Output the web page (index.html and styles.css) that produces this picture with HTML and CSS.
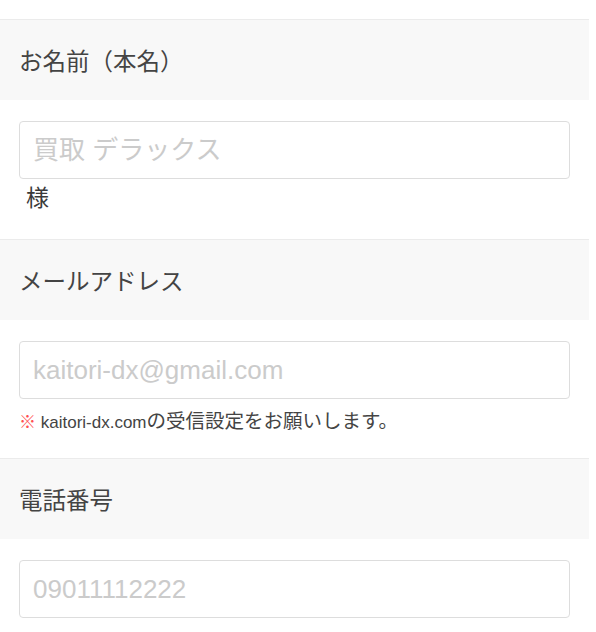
FILE: index.html
```html
<!DOCTYPE html>
<html lang="ja">
<head>
<meta charset="utf-8">
<title>お客様情報</title>
<link rel="stylesheet" href="styles.css">
</head>
<body>
<form class="form">
  <section class="section">
    <div class="section-head">お名前（本名）</div>
    <div class="section-body">
      <input class="field" type="text" placeholder="買取 デラックス">
      <div class="suffix">様</div>
    </div>
  </section>
  <section class="section">
    <div class="section-head">メールアドレス</div>
    <div class="section-body">
      <input class="field" type="email" placeholder="kaitori-dx@gmail.com">
      <p class="note"><span class="note-mark">※</span> kaitori-dx.com<span class="note-ja">の受信設定をお願いします。</span></p>
    </div>
  </section>
  <section class="section">
    <div class="section-head">電話番号</div>
    <div class="section-body">
      <input class="field" type="tel" placeholder="09011112222">
    </div>
  </section>
</form>
</body>
</html>
```

FILE: styles.css
```css
html {
  overflow: hidden;
}

body {
  margin: 0;
  padding-top: 19px;
  background: #ffffff;
  font-family: "Liberation Sans", "Noto Sans CJK JP", sans-serif;
  color: #3a3a3a;
}

.form {
  width: 589px;
  margin: 0;
}

.section {
  border-top: 1px solid #ebebeb;
}

.section-head {
  height: 80px;
  background: #f8f8f8;
  padding-left: 19px;
  display: flex;
  align-items: center;
  font-size: 23.5px;
  color: #444444;
}

.section-body {
  padding: 21px 19px 21px;
}

.field {
  display: block;
  width: 100%;
  box-sizing: border-box;
  height: 58px;
  margin: 0;
  border: 1px solid #dddddd;
  border-radius: 4px;
  padding: 0 13px;
  font-family: "Liberation Sans", "Noto Sans CJK JP", sans-serif;
  font-size: 26px;
  color: #333333;
  background: #ffffff;
  outline: none;
}

.field::placeholder {
  color: #cbcbcb;
}

.suffix {
  line-height: 39px;
  font-size: 23px;
  padding-left: 7px;
  color: #3a3a3a;
}

.note {
  margin: 10px 0 0;
  height: 28px;
  line-height: 28px;
  font-size: 17px;
  color: #444444;
  overflow: hidden;
}

.note-mark {
  color: #ff4f4f;
  font-family: "Noto Sans CJK JP", sans-serif;
  line-height: 20px;
}

.note-ja {
  font-size: 19.5px;
  line-height: 20px;
}
```
